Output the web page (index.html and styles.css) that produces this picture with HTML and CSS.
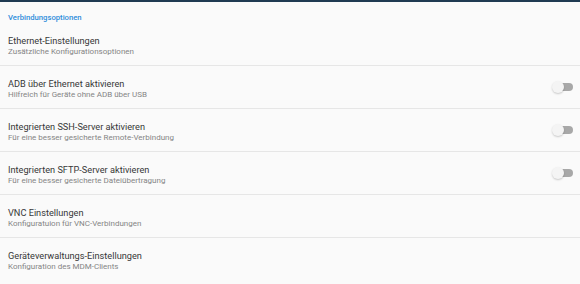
FILE: index.html
```html
<!DOCTYPE html>
<html lang="de">
<head>
  <meta charset="UTF-8" />
  <meta name="viewport" content="width=device-width, initial-scale=1.0" />
  <title>Verbindungsoptionen</title>
  <link rel="stylesheet" href="styles.css">
</head>
<body>
  <div class="topbar"></div>
  <div class="settings">
    <!-- Kategorie -->
    <div class="category">Verbindungsoptionen</div>

    <div class="pref">
      <div class="pref-text">
        <div class="pref-title">Ethernet-Einstellungen</div>
        <div class="pref-summary">Zusätzliche Konfigurationsoptionen</div>
      </div>
    </div>

    <div class="pref">
      <div class="pref-text">
        <div class="pref-title">ADB über Ethernet aktivieren</div>
        <div class="pref-summary">Hilfreich für Geräte ohne ADB über USB</div>
      </div>
      <div class="switch"><span class="track"></span><span class="thumb"></span></div>
    </div>

    <div class="pref">
      <div class="pref-text">
        <div class="pref-title">Integrierten SSH-Server aktivieren</div>
        <div class="pref-summary">Für eine besser gesicherte Remote-Verbindung</div>
      </div>
      <div class="switch"><span class="track"></span><span class="thumb"></span></div>
    </div>

    <div class="pref">
      <div class="pref-text">
        <div class="pref-title">Integrierten SFTP-Server aktivieren</div>
        <div class="pref-summary">Für eine besser gesicherte Dateiübertragung</div>
      </div>
      <div class="switch"><span class="track"></span><span class="thumb"></span></div>
    </div>

    <div class="pref">
      <div class="pref-text">
        <div class="pref-title">VNC Einstellungen</div>
        <div class="pref-summary">Konfiguratuion für VNC-Verbindungen</div>
      </div>
    </div>

    <div class="pref last">
      <div class="pref-text">
        <div class="pref-title">Geräteverwaltungs-Einstellungen</div>
        <div class="pref-summary">Konfiguration des MDM-Clients</div>
      </div>
    </div>
  </div>
</body>
</html>
```

FILE: styles.css
```css
/* Grundlayout */
body {
  margin: 0;
  padding: 0;
  background: #fafafa;
  font-family: Roboto, 'Noto Sans', sans-serif;
  height: 284px;
  overflow: hidden;
}
.topbar {
  height: 2px;
  background: #1f3a52;
}
.category {
  padding: 11px 8px 0;
  line-height: 10px;
  height: 10px;
  font-size: 7.7px;
  font-weight: 500;
  color: #2f8ddb;
}
/* Einstellungszeilen */
.pref {
  display: flex;
  align-items: center;
  height: 42px;
  border-bottom: 1px solid #e6e6e6;
  padding: 0 7px 0 8px;
}
.pref.last {
  border-bottom: none;
}
.pref-text {
  flex: 1;
  padding-top: 3px;
}
.pref-title {
  font-size: 9.2px;
  line-height: 11px;
  color: #383838;
}
.pref-summary {
  font-size: 8px;
  line-height: 11px;
  color: #858585;
}
/* Schalter (aus) */
.switch {
  position: relative;
  width: 21px;
  height: 12px;
}
.track {
  position: absolute;
  left: 5px;
  top: 2px;
  width: 16px;
  height: 8px;
  border-radius: 4px;
  background: #a8a8a8;
}
.thumb {
  position: absolute;
  left: 0;
  top: 0;
  width: 12px;
  height: 12px;
  border-radius: 50%;
  background: #f4f4f4;
  box-shadow: 0 1px 2px rgba(0, 0, 0, 0.2);
}
```
